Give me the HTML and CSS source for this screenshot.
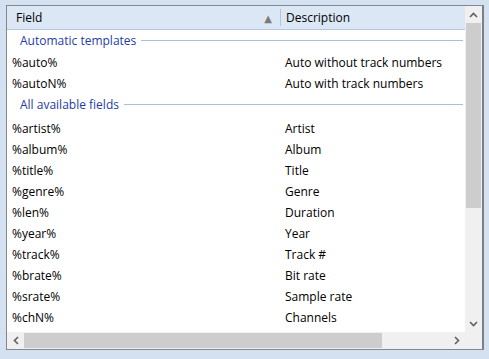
FILE: index.html
```html
<!DOCTYPE html>
<html lang="en">
<head>
  <meta charset="UTF-8" />
  <title>Fields</title>
  <link rel="stylesheet" href="styles.css">
</head>
<body>
  <div class="frame">
    <div class="list">
      <div class="header">
        <div class="col-field">Field <span class="sort">&#9650;</span></div>
        <div class="col-desc">Description</div>
      </div>

      <div class="group first"><span>Automatic templates</span></div>
      <div class="row"><div class="c1">%auto%</div><div class="c2">Auto without track numbers</div></div>
      <div class="row"><div class="c1">%autoN%</div><div class="c2">Auto with track numbers</div></div>

      <div class="group"><span>All available fields</span></div>
      <div class="row"><div class="c1">%artist%</div><div class="c2">Artist</div></div>
      <div class="row"><div class="c1">%album%</div><div class="c2">Album</div></div>
      <div class="row"><div class="c1">%title%</div><div class="c2">Title</div></div>
      <div class="row"><div class="c1">%genre%</div><div class="c2">Genre</div></div>
      <div class="row"><div class="c1">%len%</div><div class="c2">Duration</div></div>
      <div class="row"><div class="c1">%year%</div><div class="c2">Year</div></div>
      <div class="row"><div class="c1">%track%</div><div class="c2">Track #</div></div>
      <div class="row"><div class="c1">%brate%</div><div class="c2">Bit rate</div></div>
      <div class="row"><div class="c1">%srate%</div><div class="c2">Sample rate</div></div>
      <div class="row"><div class="c1">%chN%</div><div class="c2">Channels</div></div>
    </div>

    <div class="vscroll">
      <div class="btn"><svg width="9" height="6" viewBox="0 0 9 6"><path d="M1 5 L4.5 1.5 L8 5" fill="none" stroke="#606060" stroke-width="1.6"/></svg></div>
      <div class="vtrack"><div class="vthumb"></div></div>
      <div class="btn"><svg width="9" height="6" viewBox="0 0 9 6"><path d="M1 1 L4.5 4.5 L8 1" fill="none" stroke="#606060" stroke-width="1.6"/></svg></div>
    </div>

    <div class="hscroll">
      <div class="btn"><svg width="6" height="9" viewBox="0 0 6 9"><path d="M5 1 L1.5 4.5 L5 8" fill="none" stroke="#606060" stroke-width="1.6"/></svg></div>
      <div class="htrack"><div class="hthumb"></div></div>
      <div class="btn"><svg width="6" height="9" viewBox="0 0 6 9"><path d="M1 1 L4.5 4.5 L1 8" fill="none" stroke="#606060" stroke-width="1.6"/></svg></div>
    </div>

    <div class="corner"></div>
  </div>
</body>
</html>
```

FILE: styles.css
```css
body {
  margin: 0;
  padding: 5px 0 0 6px;
  background: #d4e1f1;
  font-family: "Open Sans", "DejaVu Sans", sans-serif;
  font-size: 12px;
  color: #000;
}
.frame {
  width: 475px;
  height: 343px;
  border: 1px solid #828790;
  border-right: 2px solid #7a7f88;
  background: #fff;
  display: grid;
  grid-template-columns: 458px 17px;
  grid-template-rows: 326px 17px;
  overflow: hidden;
}
.list {
  overflow: hidden;
}
.header {
  height: 23px;
  background: #dbe7f5;
  border-bottom: 1px solid #b6c6dc;
  display: flex;
  align-items: center;
}
.col-field {
  width: 264px;
  padding-left: 9px;
  display: flex;
  align-items: center;
  border-right: 1px solid #b9c5d6;
  height: 17px;
}
.sort {
  margin-left: auto;
  margin-right: 8px;
  color: #7c7c7c;
  font-size: 10px;
}
.col-desc {
  padding-left: 5px;
}
.group {
  height: 24px;
  display: flex;
  align-items: center;
  padding: 0 2px 4px 13px;
  box-sizing: border-box;
  color: #1f3ca6;
}
.group.first {
  height: 22px;
  padding-bottom: 1px;
}
.group::after {
  content: "";
  flex: 1;
  height: 1px;
  background: #a8bde0;
  margin-left: 5px;
}
.row {
  height: 21px;
  display: flex;
  align-items: center;
}
.c1 {
  width: 268px;
  padding-left: 5px;
}
.c2 {
  padding-left: 5px;
}
.vscroll {
  background: #f0f0f0;
  display: flex;
  flex-direction: column;
}
.btn {
  width: 17px;
  height: 17px;
  display: flex;
  align-items: center;
  justify-content: center;
  flex: none;
}
.vtrack {
  flex: 1;
}
.vthumb {
  margin: 0 1px;
  height: 185px;
  background: #cdcdcd;
}
.hscroll {
  background: #f0f0f0;
  display: flex;
}
.htrack {
  flex: 1;
  display: flex;
  align-items: stretch;
  padding: 1px 0;
}
.hthumb {
  width: 358px;
  background: #cdcdcd;
}
.corner {
  background: #f0f0f0;
}
```
